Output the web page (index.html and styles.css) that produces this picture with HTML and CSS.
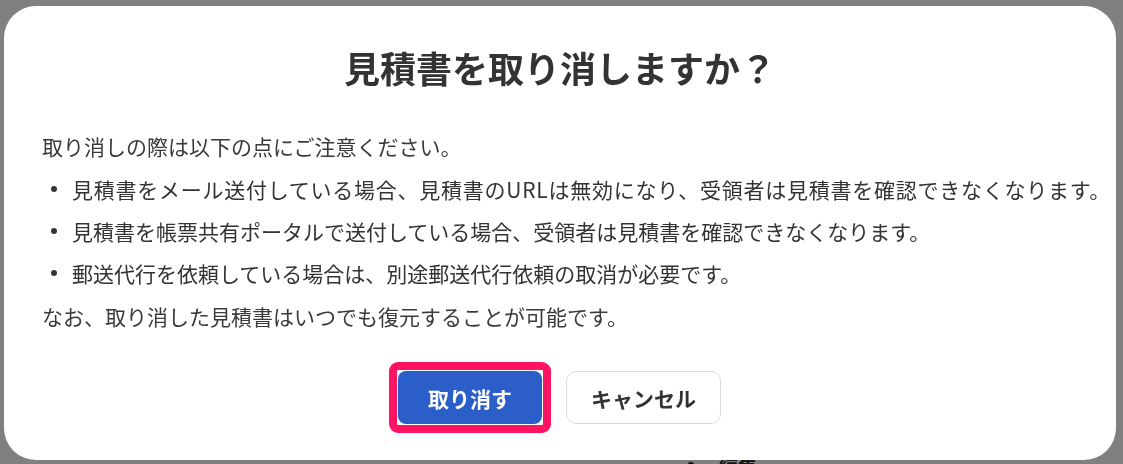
FILE: index.html
```html
<!DOCTYPE html>
<html lang="ja">
<head>
  <meta charset="utf-8">
  <title>見積書の取り消し</title>
  <link rel="stylesheet" href="styles.css">
</head>
<body>
  <div class="page">
    <div class="page-actions">
      <span class="edit-link"><span class="edit-icon">✎</span>編集</span>
    </div>
  </div>

  <div class="overlay">
    <div class="modal" role="dialog" aria-labelledby="modalTitle">
      <h2 id="modalTitle" class="modal-title">見積書を取り消しますか？</h2>

      <div class="modal-body">
        <p class="lead">取り消しの際は以下の点にご注意ください。</p>
        <ul class="notes">
          <li class="wide">見積書をメール送付している場合、見積書のURLは無効になり、受領者は見積書を確認できなくなります。</li>
          <li>見積書を帳票共有ポータルで送付している場合、受領者は見積書を確認できなくなります。</li>
          <li>郵送代行を依頼している場合は、別途郵送代行依頼の取消が必要です。</li>
        </ul>
        <p class="lead">なお、取り消した見積書はいつでも復元することが可能です。</p>
      </div>

      <div class="modal-actions">
        <span class="focus-ring">
          <button type="button" class="btn primary">取り消す</button>
        </span>
        <button type="button" class="btn secondary">キャンセル</button>
      </div>
    </div>
  </div>
</body>
</html>
```

FILE: styles.css
```css
body {
  margin: 0;
  padding: 0;
  background: #808080;
  font-family: "Noto Sans CJK JP", "Noto Sans", sans-serif;
  color: #333;
  overflow: hidden;
}

/* page underneath the dialog, dimmed */
.page {
  height: 464px;
}

.page-actions {
  padding: 455px 0 0 686px;
}

.edit-link {
  display: flex;
  align-items: center;
  gap: 18px;
  font-size: 19px;
  line-height: 24px;
  color: #141414;
  font-weight: 700;
}

.edit-icon {
  font-size: 18px;
}

.overlay {
  position: fixed;
  inset: 0;
}

.modal {
  box-sizing: border-box;
  width: 1112px;
  height: 454px;
  margin: 6px 0 0 4px;
  background: #fff;
  border-radius: 32px;
  padding: 37px 38px 27px;
  display: flex;
  flex-direction: column;
}

.modal-title {
  margin: 0;
  text-align: center;
  font-size: 36px;
  line-height: 48px;
  font-weight: 700;
  color: #333;
}

.modal-body {
  margin-top: 39px;
  display: flex;
  flex-direction: column;
  gap: 11px;
}

.lead {
  margin: 0;
  font-size: 21px;
  line-height: 32px;
  color: #3a3a3a;
}

.notes {
  list-style: none;
  margin: 0;
  padding: 0 0 0 30px;
  display: flex;
  flex-direction: column;
  gap: 10px;
}

.notes li {
  position: relative;
  font-size: 21px;
  line-height: 32px;
  color: #333;
  white-space: nowrap;
}

.notes li.wide {
  letter-spacing: 0.75px;
}

.notes li::before {
  content: "";
  position: absolute;
  left: -21px;
  top: 13px;
  width: 6px;
  height: 6px;
  border-radius: 50%;
  background: #333;
}

.modal-actions {
  margin-top: auto;
  margin-right: 10px;
  display: flex;
  justify-content: center;
  align-items: center;
  gap: 15px;
}

.focus-ring {
  display: flex;
  padding: 1px;
  border: 8px solid #ff1464;
  border-radius: 9px;
  background: #fff;
}

.btn {
  height: 53px;
  font-family: inherit;
  font-size: 21px;
  font-weight: 700;
  border-radius: 8px;
  cursor: pointer;
}

.btn.primary {
  width: 144px;
  color: #fff;
  background: #2b5ec8;
  border: none;
}

.btn.secondary {
  width: 155px;
  color: #333;
  background: #fff;
  border: 1px solid #dcdcdc;
  border-radius: 10px;
}
```
